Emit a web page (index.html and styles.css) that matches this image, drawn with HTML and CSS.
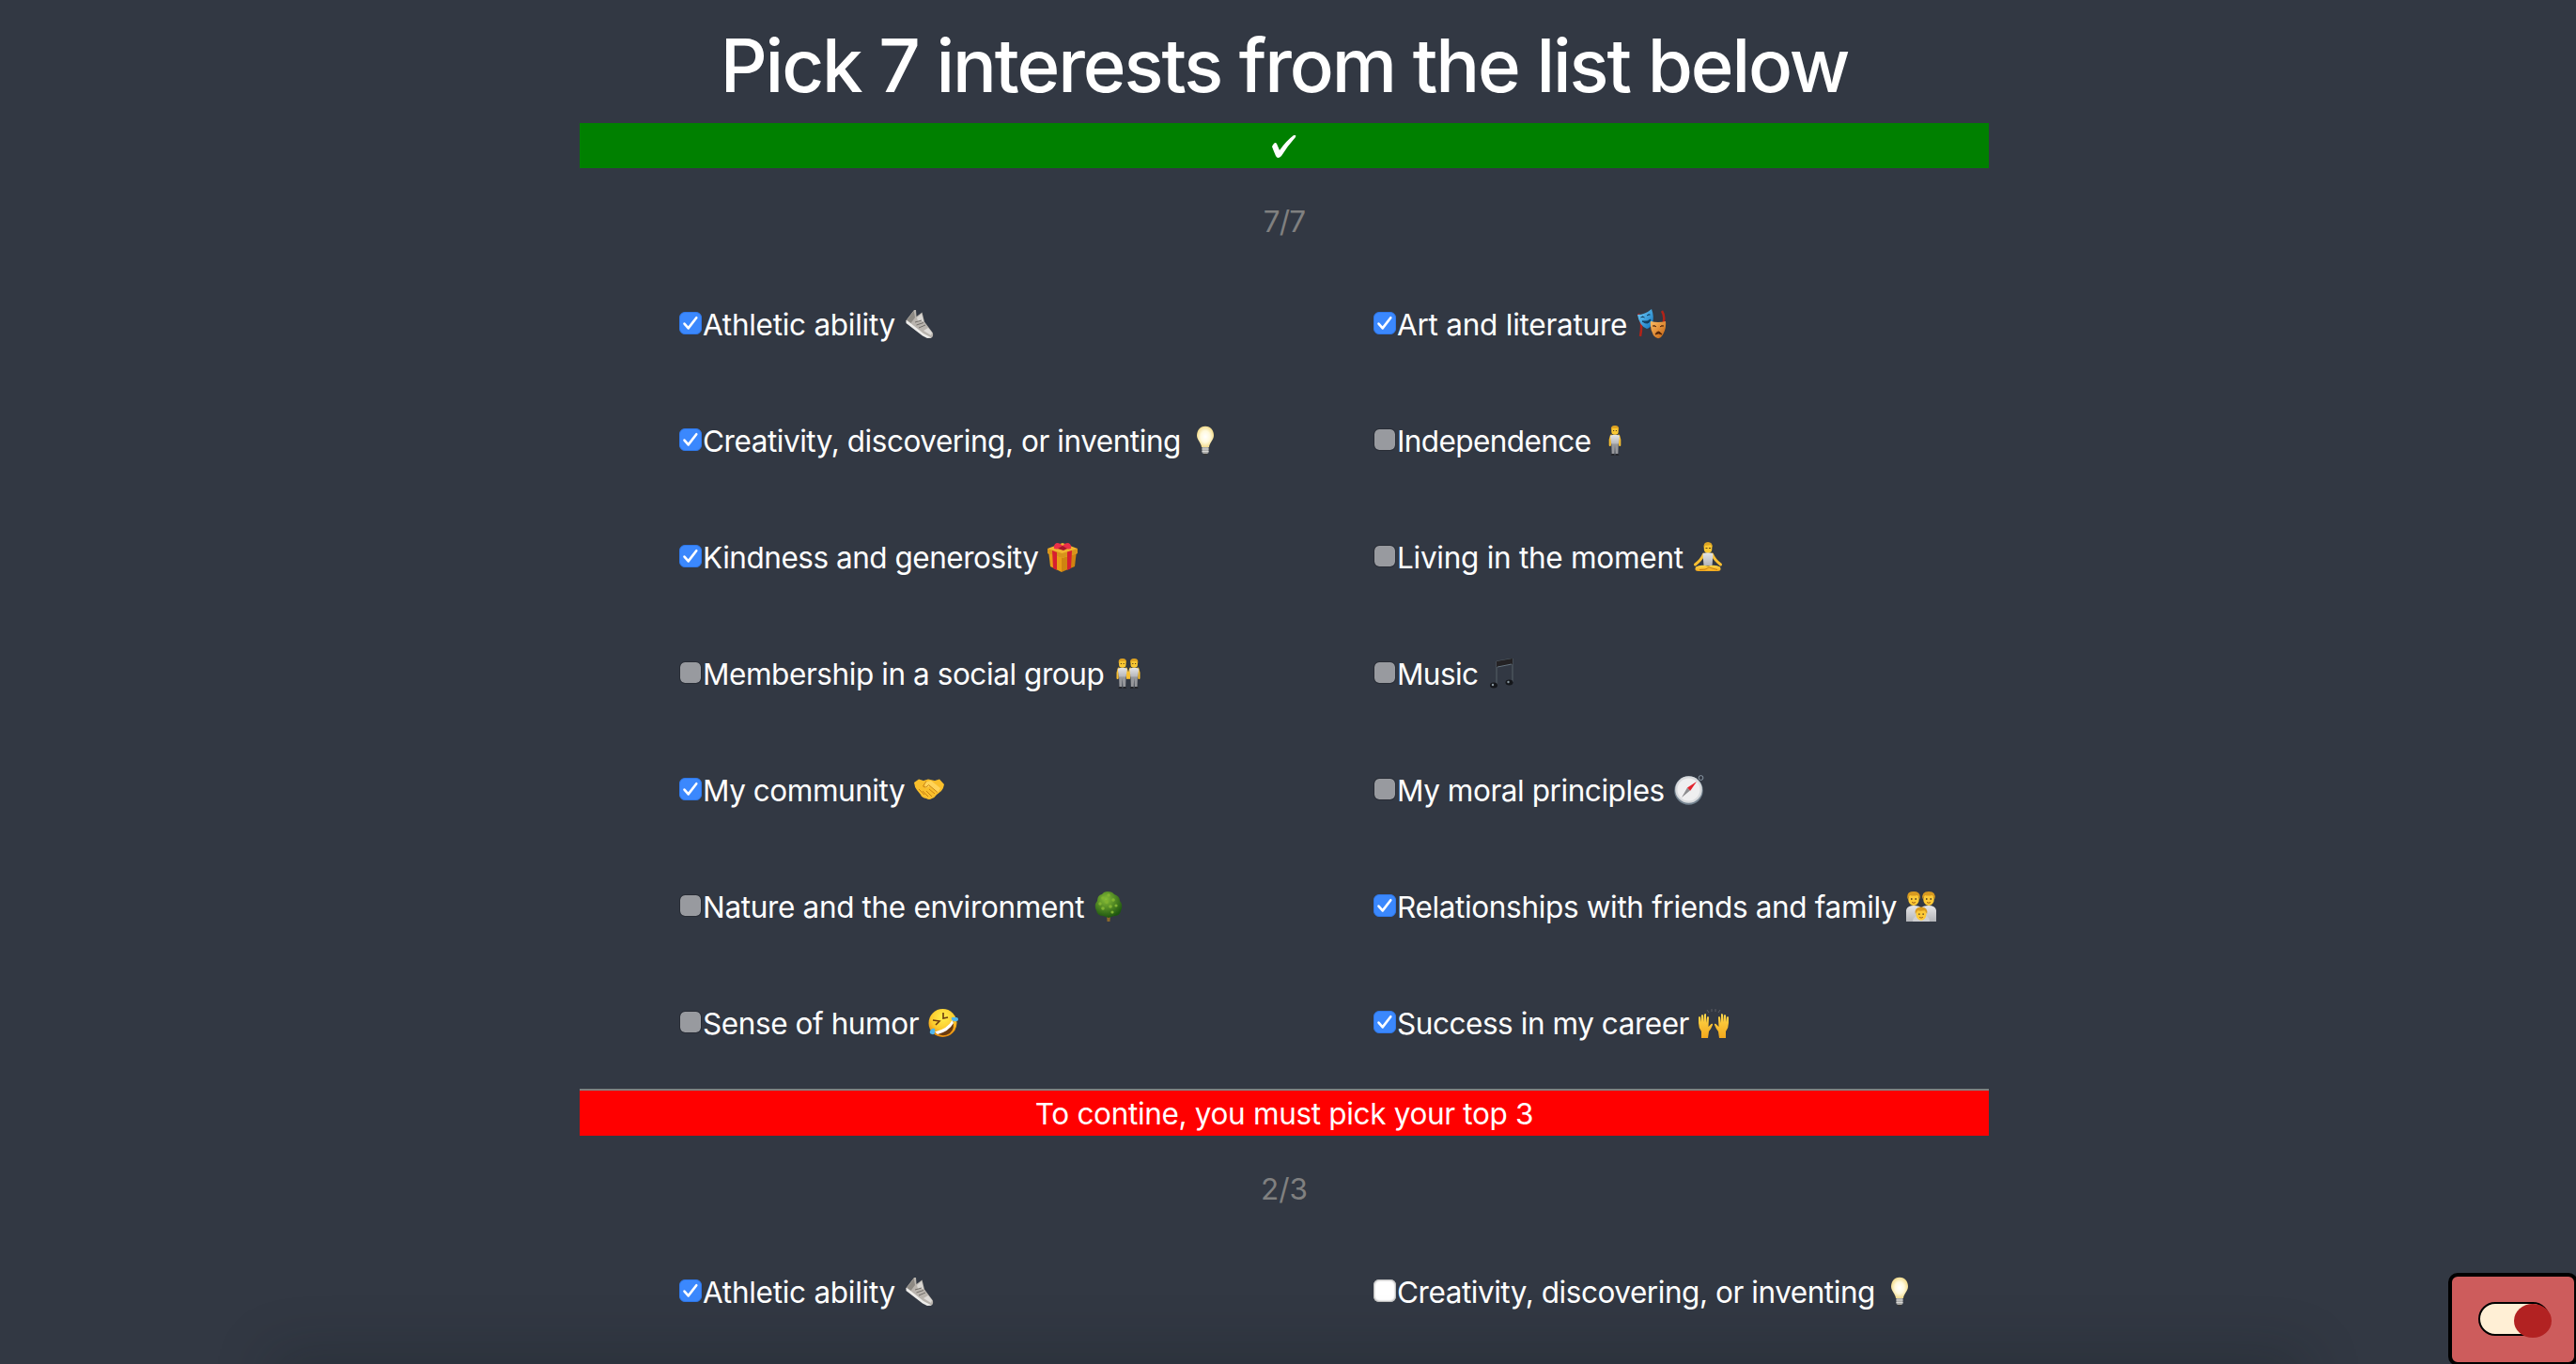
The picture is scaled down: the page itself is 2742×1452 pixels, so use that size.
FILE: index.html
```html
<!DOCTYPE html>
<html lang="en">
<head>
<meta charset="utf-8">
<title>Interests</title>
<link rel="stylesheet" href="styles.css">
</head>
<body>
<svg class="defs" width="0" height="0" aria-hidden="true">
  <defs>
    <linearGradient id="skin" x1="0" y1="0" x2="0" y2="1"><stop offset="0" stop-color="#ffd94a"/><stop offset="1" stop-color="#f2a81d"/></linearGradient>
    <linearGradient id="shirt" x1="0" y1="0" x2="0" y2="1"><stop offset="0" stop-color="#e6e6e8"/><stop offset="1" stop-color="#b4b5b9"/></linearGradient>
    <radialGradient id="glow"><stop offset="0" stop-color="#fff"/><stop offset=".55" stop-color="#fff9dc"/><stop offset="1" stop-color="#f3dc8f"/></radialGradient>
    <radialGradient id="face" cx=".5" cy=".3" r=".7"><stop offset="0" stop-color="#fff04e"/><stop offset=".6" stop-color="#fcc92c"/><stop offset="1" stop-color="#e8890c"/></radialGradient>
    <linearGradient id="blue" x1="0" y1="0" x2="1" y2="1"><stop offset="0" stop-color="#72d0fb"/><stop offset="1" stop-color="#1173bd"/></linearGradient>
    <linearGradient id="orange" x1="0" y1="0" x2="1" y2="1"><stop offset="0" stop-color="#ffbd62"/><stop offset="1" stop-color="#c2600f"/></linearGradient>
    <radialGradient id="leaf" cx=".4" cy=".3" r=".7"><stop offset="0" stop-color="#86bd38"/><stop offset="1" stop-color="#1d5510"/></radialGradient>

    <symbol id="tick" viewBox="0 0 24 24"><path d="M5.500 12.600 9.700 17.400 18.300 6.200" fill="none" stroke="#fff" stroke-width="2.600" stroke-linecap="round" stroke-linejoin="round"/></symbol>
    <symbol id="shoe" viewBox="0 0 32 32">
      <path d="M1.500 12 10 1 12 1 12.500 8 18.500 3.500 21 13.500 30 25.500Q31 31 26 31L20 28 2 14Z" fill="#b9b4ae"/>
      <path d="M2 12 9.800 2 11 9 6.500 15Z" fill="#8d8983"/><path d="M13 9 18 5 20 13 14 13Z" fill="#d9d7d3"/>
      <path d="M1.500 12 3 12.500 20 26 28.500 30.500 24 31 19 28.500 1.500 15Z" fill="#eeedeb"/>
      <path d="M11 14 18 12M12.500 17 20 14.500M15 20 22 17" stroke="#716d69" stroke-width="1"/><path d="M20 23 25 20 29 25 28 28Z" fill="#dedbd8"/>
    </symbol>
    <symbol id="bulb" viewBox="0 0 32 32">
      <path d="M16 .7C10 .7 7 5.500 7 10.500c0 5 4.500 7.500 5 12.500h8c.5-5 5-7.500 5-12.500C25 5.500 22 .7 16 .7Z" fill="url(#glow)"/>
      <path d="M12.500 23h7v6l-1.500 1h-4l-1.500-1Z" fill="#a9a9a7"/><path d="M12.500 25h7M12.500 27.500h7" stroke="#d7d7d5"/><path d="M14.500 30h3v1.500h-3Z" fill="#3a3834"/>
    </symbol>
    <symbol id="gift" viewBox="0 0 32 32">
      <path d="M1 9 15 13V32L3 26Z" fill="#e99c16"/><path d="M31 9 15 13V32L29 26Z" fill="#cf8410"/>
      <path d="M0 7 16 1 32 7V12L15.500 17 0 12Z" fill="#f2b42f"/><path d="M0 7 15.500 12 32 7V12L15.500 17 0 12Z" fill="#d8941b"/>
      <path d="M5 9 10 11V30L6 28ZM21 10.500 26 9 25 28 21 30Z" fill="#d81f30"/>
      <path d="M16 4C12-1 6 0 7 7c3 1 7 0 9-1 3 1 6 2 9 1C26 0 20-1 16 4Z" fill="#ec3048"/><path d="M11 7 16 4 21 7 17 9Z" fill="#a8162a"/>
    </symbol>
    <symbol id="person" viewBox="0 0 32 32">
      <path d="M12.200 18h7.600l-.5 12.500h-2.800L16 21l-.5 9.500h-2.800Z" fill="#96979b"/><path d="M12.500 30h2.800v2h-3.800ZM16.700 30h2.800l1 2h-3.800Z" fill="#24262b"/>
      <path d="M12 10.500 10.800 15V21M20 10.500 21.200 15V21" fill="none" stroke="#f8bf31" stroke-width="2.200" stroke-linecap="round" stroke-linejoin="round"/>
      <path d="M11 11Q16 8.500 21 11L19.800 19.500h-7.600Z" fill="url(#shirt)"/>
      <rect x="12.300" y="1" width="7.400" height="8.800" rx="3.300" fill="#fbc832"/><path d="M12 5Q11 0 16 0t4 5L18.500 2.800Q15 3.300 13.500 2.800Z" fill="#e0a321"/><path d="M14 5.500h1.200m1.600 0h1.200" stroke="#59421b"/>
    </symbol>
    <symbol id="lotus" viewBox="0 0 32 32">
      <path d="M11.500 13Q9 19 2.500 24M20.500 13Q23 19 29.500 24" fill="none" stroke="#f8bf31" stroke-width="3" stroke-linecap="round"/>
      <path d="M10.500 12.500Q16 9.500 21.500 12.500L20.500 25h-9Z" fill="url(#shirt)"/><path d="M3 26.500Q8 23.500 16 25.500q8-2 13 1 2 4.500-3 4.500H6q-5 0-3-4.500Z" fill="url(#skin)"/><path d="M7 29.500Q14 30 17 27M26 29.500l-9-2.500" stroke="#c87d10" fill="none"/>
      <rect x="11.800" y="1.500" width="8.500" height="10" rx="4" fill="#fbc832"/><path d="M11.500 6Q11 0 16 0t5 6L19 3Q15 4 13 3.500Z" fill="#dda524"/><path d="M13.500 6.500h2m1.500 0h2" stroke="#59421b"/>
    </symbol>
    <symbol id="friends" viewBox="0 0 32 32"><use href="#person" x="-6.200" width="32" height="32"/><use href="#person" x="6.200" width="32" height="32"/></symbol>
    <symbol id="notes" viewBox="0 0 32 32">
      <path d="M10 3 27 0V25M10 3V28" fill="none" stroke="#566069" stroke-width="1"/><path d="M10 3 27 0V6L10 9Z" fill="#242224"/><path d="M11 9 26 6" stroke="#65737e"/>
      <ellipse cx="7" cy="28.500" rx="4" ry="3" fill="#15171b"/><ellipse cx="23.500" cy="25.500" rx="4" ry="3" fill="#15171b"/><circle cx="6" cy="28" r="1.200" fill="#8c9aa2"/><circle cx="22.500" cy="25" r="1.200" fill="#8c9aa2"/>
    </symbol>
    <symbol id="hands" viewBox="0 0 32 32">
      <path d="M0 8 5 4.500 10 6l5-1.500L22 6l5-1.500L32 10q-.5 4-3 7l-5 4q-2 3-5 4-3 2-6 0-5-1-6-4l-4-5Q.5 13 0 8Z" fill="#f9bf2c"/>
      <path d="M11 8 18 6 28 14 25 19 17 12 12 14Z" fill="#ffd45a"/><path d="M13 6.500 9.500 12q3 2.500 6-1.500l9.500 8M5 15l6 6M13 17l6 6M16 15l6 5M9 17l6 6" fill="none" stroke="#cb8412" stroke-width="1"/>
    </symbol>
    <symbol id="compass" viewBox="0 0 32 32">
      <circle cx="28.500" cy="3" r="2.400" fill="none" stroke="#8a98a5"/><circle cx="15.500" cy="16.500" r="15.200" fill="#758491"/><circle cx="15.500" cy="15.500" r="14.300" fill="#d8dadd"/><circle cx="15.500" cy="15.500" r="12" fill="#efeff0"/>
      <path d="M8 24 14 13.500 17 16.500Z" fill="#8d8d8f"/><path d="M24 7 14 13.500 17.200 16.800Z" fill="#e2212b"/>
    </symbol>
    <symbol id="tree" viewBox="0 0 32 32">
      <path d="M14 25h4l-.5 7h-3Z" fill="#8b672b"/><path d="M15 0Q20 0 22 3q6 2 6 7 4 5 1 11-1 5-7 5l-6 2-6-2q-6 0-7-6-3-5 1-10Q4 4 9 3 11 0 15 0Z" fill="url(#leaf)"/>
      <g fill="#80b331"><circle cx="10" cy="7" r="1.800"/><circle cx="16" cy="4" r="1.800"/><circle cx="21" cy="9" r="1.800"/><circle cx="7" cy="13" r="1.700"/><circle cx="14" cy="11" r="2"/><circle cx="24" cy="15" r="1.600"/><circle cx="18" cy="16" r="1.800"/><circle cx="10" cy="18" r="1.800"/><circle cx="20" cy="22" r="1.600"/></g>
    </symbol>
    <symbol id="family" viewBox="0 0 32 32">
      <path d="M0 32V20Q1 15 8 15t8 3q1-3 8-3t8 5V32Z" fill="url(#shirt)"/>
      <g id="head"><ellipse cx="8" cy="8" rx="5.800" ry="7" fill="#fdc936"/><path d="M1.500 8Q0 0 8 0t6.500 8L12 4Q7 5 4 4Z" fill="#d89a20"/><path d="M5 8h1.500M9.500 8H11" stroke="#3e3020" stroke-width="1.300"/><path d="M6 11.500Q8 13 10 11.500" stroke="#9b5b13" fill="none"/></g>
      <use href="#head" x="16"/><path d="M7 32q0-7 9-7t9 7Z" fill="#cfcfd2"/><use href="#head" transform="translate(8.400 16.500) scale(.95)"/>
    </symbol>
    <symbol id="rofl" viewBox="0 0 32 32">
      <circle cx="15.500" cy="16" r="15" fill="url(#face)"/><path d="M7 26Q22 23 26 13 29 22 23 27q-8 5-16-1Z" fill="#6b3a0e"/><path d="M7 25.500Q21 22 25.500 13l1.500 3Q22 25 10 28Z" fill="#fff"/>
      <path d="M5 13 12 14 8 18M16 5 16 11 21 10" fill="none" stroke="#6b3a0e" stroke-width="1.600"/>
      <path d="M25 10q7-1 7 2t-5 2Q24 13 25 10ZM7 22q1 7-3 6T3 23Q5 21 7 22Z" fill="#50b7ee"/>
    </symbol>
    <symbol id="praise" viewBox="0 0 32 32">
      <path id="palm" d="M3 32V25Q0 21 0 16V10q1-2 2 0l.5 5L3 8q1-2 2 0l.5 7L6 7q1.500-2 2 0v9l1-6q1-2 2 0l-.5 10 3-3q2-1 1.500 1-2 5-4 7l-1 7Z" fill="url(#skin)"/>
      <use href="#palm" transform="matrix(-1 0 0 1 32 0)"/><path d="M11 5 9 2M14 4V1M18 4V1M21 5l2-3" stroke="#5a5d64" stroke-width="1"/>
    </symbol>
  </defs>
</svg>

<main class="page">
  <h1 class="title"><span class="title-text">Pick 7 interests from the list below</span></h1>

  <section class="picker">
    <div class="banner banner-done"><svg class="done-mark" viewBox="0 0 26 24"><path d="M0 12Q3 6 5 9L8 16Q15 6 23 0q3-1 2 2Q16 12 10 22q-4 4-6 0Q1 15 0 12Z" fill="#fff"/></svg></div>
    <p class="count count-all">7/7</p>
    <div class="options">
      <label class="option"><span class="box on"><svg><use href="#tick"/></svg></span><span class="name w-athletic">Athletic ability</span><svg class="emoji"><use href="#shoe"/></svg></label>
      <label class="option"><span class="box on"><svg><use href="#tick"/></svg></span><span class="name w-art">Art and literature</span><svg class="emoji" viewBox="0 0 32 32"><path d="M2 5Q7 14 4 29M27 2q4 6 1 15" fill="none" stroke="#b22318" stroke-width="2.500"/><path d="M1 6Q9 6 16 0q3 8 1 15-2 5-6 6Q3 18 1 6Z" fill="url(#blue)"/><path d="M4.500 9q2-2 4 0M11 7q2-2 3.500-1M6 13q6 1 9-2-2 7-9 2Z" fill="#123d5d" stroke="#123d5d"/><path d="M15 13q8 2 16 0 1 10-5 17-4 3-8-2-4-7-3-15Z" fill="url(#orange)"/><path d="M17 18q3-1 4 1M25 19q1-2 4-1M20 27q3-6 7 0-4-2-7 0Z" fill="#54260a" stroke="#54260a"/></svg></label>
      <label class="option"><span class="box on"><svg><use href="#tick"/></svg></span><span class="name w-creativity">Creativity, discovering, or inventing</span><svg class="emoji"><use href="#bulb"/></svg></label>
      <label class="option"><span class="box off"></span><span class="name w-independence">Independence</span><svg class="emoji"><use href="#person"/></svg></label>
      <label class="option"><span class="box on"><svg><use href="#tick"/></svg></span><span class="name w-kindness">Kindness and generosity</span><svg class="emoji"><use href="#gift"/></svg></label>
      <label class="option"><span class="box off"></span><span class="name w-living">Living in the moment</span><svg class="emoji"><use href="#lotus"/></svg></label>
      <label class="option"><span class="box off"></span><span class="name w-membership">Membership in a social group</span><svg class="emoji"><use href="#friends"/></svg></label>
      <label class="option"><span class="box off"></span><span class="name w-music">Music</span><svg class="emoji"><use href="#notes"/></svg></label>
      <label class="option"><span class="box on"><svg><use href="#tick"/></svg></span><span class="name w-community">My community</span><svg class="emoji"><use href="#hands"/></svg></label>
      <label class="option"><span class="box off"></span><span class="name w-moral">My moral principles</span><svg class="emoji"><use href="#compass"/></svg></label>
      <label class="option"><span class="box off"></span><span class="name w-nature">Nature and the environment</span><svg class="emoji"><use href="#tree"/></svg></label>
      <label class="option"><span class="box on"><svg><use href="#tick"/></svg></span><span class="name w-relations">Relationships with friends and family</span><svg class="emoji"><use href="#family"/></svg></label>
      <label class="option"><span class="box off"></span><span class="name w-humor">Sense of humor</span><svg class="emoji"><use href="#rofl"/></svg></label>
      <label class="option"><span class="box on"><svg><use href="#tick"/></svg></span><span class="name w-career">Success in my career</span><svg class="emoji"><use href="#praise"/></svg></label>
    </div>
  </section>

  <section class="picker picker-top">
    <div class="banner banner-todo"><span class="todo-text">To contine, you must pick your top 3</span></div>
    <p class="count">2/3</p>
    <div class="options">
      <label class="option"><span class="box on"><svg><use href="#tick"/></svg></span><span class="name w-athletic">Athletic ability</span><svg class="emoji"><use href="#shoe"/></svg></label>
      <label class="option"><span class="box empty"></span><span class="name w-creativity">Creativity, discovering, or inventing</span><svg class="emoji"><use href="#bulb"/></svg></label>
    </div>
  </section>
</main>

<div class="footer-shadow"></div>
<div class="theme"><div class="track"><div class="knob"></div></div></div>
</body>
</html>
```
FILE: styles.css
```css
* { box-sizing: border-box; }
html, body { height: 100%; }
body {
  margin: 0;
  overflow: hidden;
  background: #323843;
  color: #fff;
  font-family: Inter, "Liberation Sans", sans-serif;
  font-size: 31.500px;
}
.defs { position: absolute; }
.page { width: 1500px; margin-left: 617px; }
.title {
  height: 131px;
  margin: 0;
  padding-top: 22px;
  font-size: 78px;
  font-weight: 500;
  line-height: 96px;
  text-align: center;
  white-space: nowrap;
}
.title-text { letter-spacing: -2.100px; }
.banner {
  display: flex;
  height: 48px;
  padding-top: 2px;
  align-items: center;
  justify-content: center;
  line-height: 46px;
  white-space: nowrap;
}
.banner-done { background: #008000; }
.banner-todo { background: #f00; }
.todo-text { letter-spacing: -.33px; }
.done-mark { width: 26px; height: 24px; }
.picker-top { border-top: 2px solid #808080; }
.count {
  margin: 0;
  padding-top: 37px;
  height: 104px;
  line-height: 40px;
  color: #808080;
  text-align: center;
}
.count-all { letter-spacing: -.8px; }
.options {
  display: grid;
  grid-template-columns: 739px 1fr;
  grid-auto-rows: 124px;
  padding-left: 106px;
}
.picker:first-of-type .options { height: 876px; }
.option { display: flex; align-items: center; height: 124px; white-space: nowrap; }
.box {
  flex: none;
  display: block;
  width: 24px;
  height: 24px;
  margin: 0 1px 2px 0;
  border-radius: 6px;
}
.box svg { display: block; width: 24px; height: 24px; }
.on { background: #3b88fd; border: 1px solid #2f78ea; }
.on svg { margin: -1px; }
.off { background: #989a9f; background-clip: padding-box; border: 1px solid #282c35; }
.empty { background: #fff; box-shadow: inset 0 0 2px 1px #aaa; }
.name { flex: none; line-height: 40px; margin-top: 1px; }
.w-athletic { letter-spacing: -.27px; }
.w-art { letter-spacing: -.24px; }
.w-creativity { letter-spacing: -.45px; }
.w-independence { letter-spacing: -.6px; }
.w-kindness { letter-spacing: -.48px; }
.w-living { letter-spacing: -.27px; }
.w-membership { letter-spacing: -.43px; }
.w-music { letter-spacing: -.6px; }
.w-community { letter-spacing: -.46px; }
.w-moral { letter-spacing: -.44px; }
.w-nature { letter-spacing: -.34px; }
.w-relations { letter-spacing: -.35px; }
.w-humor { letter-spacing: -.42px; }
.w-career { letter-spacing: -.45px; }
.emoji { flex: none; width: 32px; height: 32px; margin-left: 10px; }
.footer-shadow {
  position: absolute;
  left: 300px;
  right: 300px;
  top: 1452px;
  height: 40px;
  box-shadow: 0 0 60px 10px rgba(20, 26, 30, .26);
}
.theme {
  position: absolute;
  left: 2606px;
  top: 1355px;
  width: 138px;
  height: 99px;
  padding: 27px 0 0 28px;
  border: 4px solid #000;
  border-radius: 10px;
  background: #cd5c5c;
}
.track {
  width: 76px;
  height: 36px;
  padding-left: 36px;
  border: 2px solid #000;
  border-radius: 18px;
  background: #ffefd5;
}
.knob { width: 40px; height: 36px; border-radius: 50%; background: #b22222; }
```
